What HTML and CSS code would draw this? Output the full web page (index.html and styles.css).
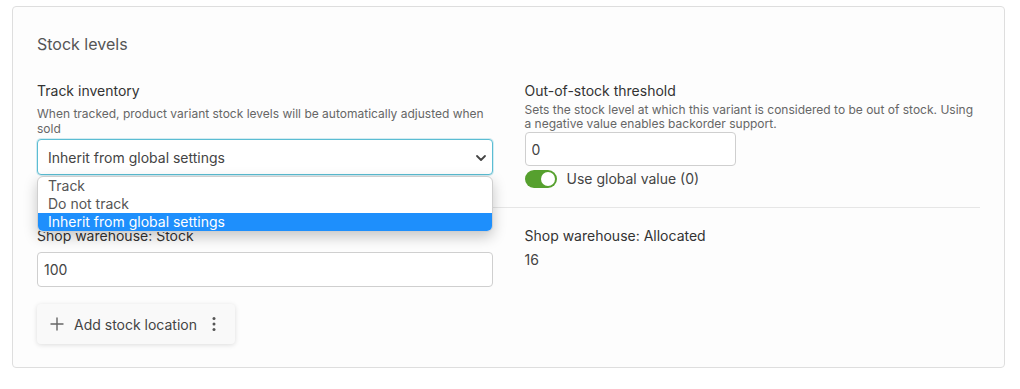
FILE: index.html
```html
<!DOCTYPE html>
<html lang="en">
<head>
    <meta charset="UTF-8">
    <meta name="viewport" content="width=device-width, initial-scale=1.0">
    <title>Stock levels</title>
    <link rel="stylesheet" href="styles.css">
</head>
<body>
    <div class="card">
        <h2 class="card-title">Stock levels</h2>

        <div class="row">
            <div class="field">
                <label class="field-label">Track inventory</label>
                <div class="field-help">When tracked, product variant stock levels will be automatically adjusted when sold</div>
                <div class="select-wrap">
                    <div class="select">Inherit from global settings</div>
                    <svg class="chevron" width="12" height="8" viewBox="0 0 12 8">
                        <path d="M2 2l4 4 4-4" fill="none" stroke="#444" stroke-width="1.8" stroke-linecap="round" stroke-linejoin="round"/>
                    </svg>
                    <ul class="dropdown">
                        <li>Track</li>
                        <li>Do not track</li>
                        <li class="selected">Inherit from global settings</li>
                    </ul>
                </div>
            </div>

            <div class="field">
                <label class="field-label">Out-of-stock threshold</label>
                <div class="field-help help-tight">Sets the stock level at which this variant is considered to be out of stock. Using a negative value enables backorder support.</div>
                <input class="input input-small" type="text" value="0">
                <div class="toggle-row">
                    <span class="toggle"><span class="knob"></span></span>
                    <span>Use global value (0)</span>
                </div>
            </div>
        </div>

        <hr class="divider">

        <div class="row">
            <div class="field">
                <label class="field-label">Shop warehouse: Stock</label>
                <input class="input stock-input" type="text" value="100">
            </div>
            <div class="field">
                <label class="field-label">Shop warehouse: Allocated</label>
                <div class="allocated">16</div>
            </div>
        </div>

        <div class="add-btn">
            <svg width="14" height="14" viewBox="0 0 14 14">
                <path d="M7 1v12M1 7h12" stroke="#666" stroke-width="1.4" stroke-linecap="round"/>
            </svg>
            <span>Add stock location</span>
            <svg class="kebab" width="4" height="16" viewBox="0 0 4 16">
                <circle cx="2" cy="2.5" r="1.5" fill="#555"/>
                <circle cx="2" cy="8" r="1.5" fill="#555"/>
                <circle cx="2" cy="13.5" r="1.5" fill="#555"/>
            </svg>
        </div>
    </div>
</body>
</html>
```

FILE: styles.css
```css
body {
    margin: 6px 15px 0 12px;
    background-color: #fff;
    font-family: Inter, "Noto Sans", sans-serif;
    color: #333;
}
.card {
    background-color: #fdfdfd;
    border: 1px solid #dedede;
    border-radius: 4px;
    padding: 24px 24px 23px;
}
.card-title {
    margin: 0 0 24px;
    font-size: 16px;
    line-height: 26px;
    font-weight: 400;
    color: #555;
}
.row {
    display: grid;
    grid-template-columns: 1fr 1fr;
    column-gap: 32px;
}
.field-label {
    display: block;
    font-size: 14px;
    line-height: 20px;
    color: #333;
}
.field-help {
    margin-top: 5px;
    font-size: 12px;
    line-height: 15px;
    color: #666;
}
.help-tight {
    margin-top: 2px;
    line-height: 14px;
}
.select-wrap {
    position: relative;
    margin-top: 3px;
}
.select {
    height: 34px;
    line-height: 36px;
    padding: 0 10px;
    border: 1px solid #5bbdd3;
    border-radius: 4px;
    background-color: #fff;
    box-shadow: 0 0 0 1px rgba(91, 189, 211, 0.25);
    font-size: 14px;
    color: #444;
}
.chevron {
    position: absolute;
    right: 6px;
    top: 15px;
}
.dropdown {
    position: absolute;
    left: 0;
    right: 0;
    top: 37px;
    z-index: 2;
    margin: 0;
    padding: 0;
    list-style: none;
    background-color: #fff;
    border: 1px solid #cfcfcf;
    border-radius: 6px;
    overflow: hidden;
    box-shadow: 0 5px 14px rgba(0, 0, 0, 0.22);
}
.dropdown li {
    height: 18px;
    line-height: 18px;
    padding: 0 10px;
    font-size: 14px;
    color: #555;
}
.dropdown li.selected {
    background-color: #1e8ffc;
    color: #fff;
}
.input {
    box-sizing: border-box;
    display: block;
    width: 100%;
    padding: 0 6px;
    border: 1px solid #cfcfcf;
    border-radius: 4px;
    background-color: #fff;
    font-family: inherit;
    font-size: 14px;
    color: #444;
}
.input-small {
    width: 211px;
    height: 34px;
    margin-top: 1px;
}
.toggle-row {
    display: flex;
    align-items: center;
    gap: 10px;
    margin-top: 4px;
    font-size: 14px;
    line-height: 18px;
    color: #444;
}
.toggle {
    display: flex;
    align-items: center;
    justify-content: flex-end;
    width: 32px;
    height: 18px;
    padding: 0 2px;
    box-sizing: border-box;
    border-radius: 9px;
    background-color: #56a02e;
}
.knob {
    width: 14px;
    height: 14px;
    border-radius: 50%;
    background-color: #fff;
}
.divider {
    margin: 19px 0 18px;
    border: none;
    border-top: 1px solid #e6e6e6;
}
.stock-input {
    height: 35px;
    margin-top: 6px;
}
.allocated {
    margin-top: 4px;
    font-size: 14px;
    line-height: 20px;
    color: #444;
}
.add-btn {
    display: inline-flex;
    align-items: center;
    margin-top: 17px;
    height: 40px;
    padding: 0 19px 0 13px;
    background-color: #f9f9f9;
    border-radius: 4px;
    box-shadow: 0 1px 5px rgba(0, 0, 0, 0.13);
    font-size: 14px;
    color: #444;
}
.add-btn span {
    margin-left: 10px;
}
.kebab {
    margin-left: 15px;
}
```
